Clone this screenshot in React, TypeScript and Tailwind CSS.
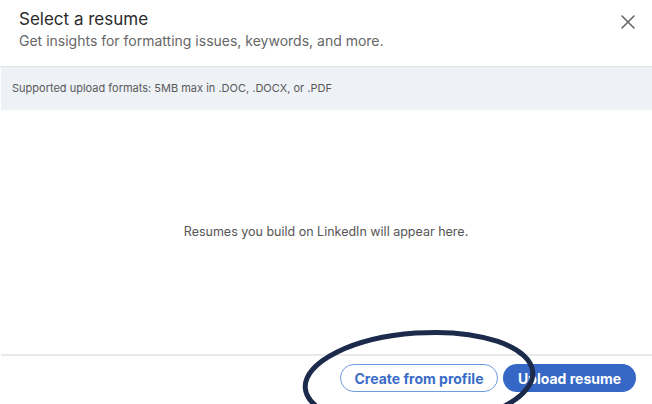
import React from "react";

export default function App() {
  return (
    <div
      className="relative w-[652px] h-[404px] overflow-hidden bg-white flex flex-col"
      style={{ fontFamily: "Inter, 'Liberation Sans', Arial, sans-serif" }}
    >
      <div className="h-[67px] shrink-0 flex items-start justify-between pl-[19px] pr-[14px] pt-[8px] border-b border-[#dfe3e8]">
        <div className="flex flex-col">
          <div className="text-[17px] leading-[22px] text-[#2b2b2b]">Select a resume</div>
          <div className="text-[14px] leading-[20px] text-[#666666] mt-[1px]">
            Get insights for formatting issues, keywords, and more.
          </div>
        </div>
        <button className="mt-[2px] w-[20px] h-[24px] flex items-center justify-center text-[#666666]">
          <svg width="16" height="16" viewBox="0 0 16 16" fill="none" stroke="currentColor" strokeWidth="1.6" strokeLinecap="round">
            <path d="M2 2 L14 14 M14 2 L2 14" />
          </svg>
        </button>
      </div>
      <div className="h-[43px] shrink-0 ml-[1px] bg-[#eef1f6] flex items-center pl-[11px]">
        <span className="text-[11px] text-[#595959]">Supported upload formats: 5MB max in .DOC, .DOCX, or .PDF</span>
      </div>
      <div className="flex-1 flex items-center justify-center">
        <span className="text-[12.5px] text-[#555555]">Resumes you build on LinkedIn will appear here.</span>
      </div>
      <div className="h-[2px] shrink-0 ml-[1px] bg-[#e9e9e9]" />
      <div className="h-[48px] shrink-0 flex items-center justify-end gap-[5px] pr-[16px] pb-[4px]">
        <button className="h-[28px] w-[158px] rounded-full border border-[#6f9be0] text-[#3a6cc7] text-[14px] font-bold flex items-center justify-center">
          Create from profile
        </button>
        <button className="h-[28px] w-[133px] rounded-full bg-[#3568c6] text-white text-[14px] font-bold flex items-center justify-center">
          Upload resume
        </button>
      </div>
      <svg className="absolute left-0 top-0 pointer-events-none" width="652" height="404" viewBox="0 0 652 404">
        <ellipse cx="419" cy="380" rx="114" ry="47" fill="none" stroke="#1c2b4b" strokeWidth="5" transform="rotate(-4 419 380)" />
      </svg>
    </div>
  );
}
